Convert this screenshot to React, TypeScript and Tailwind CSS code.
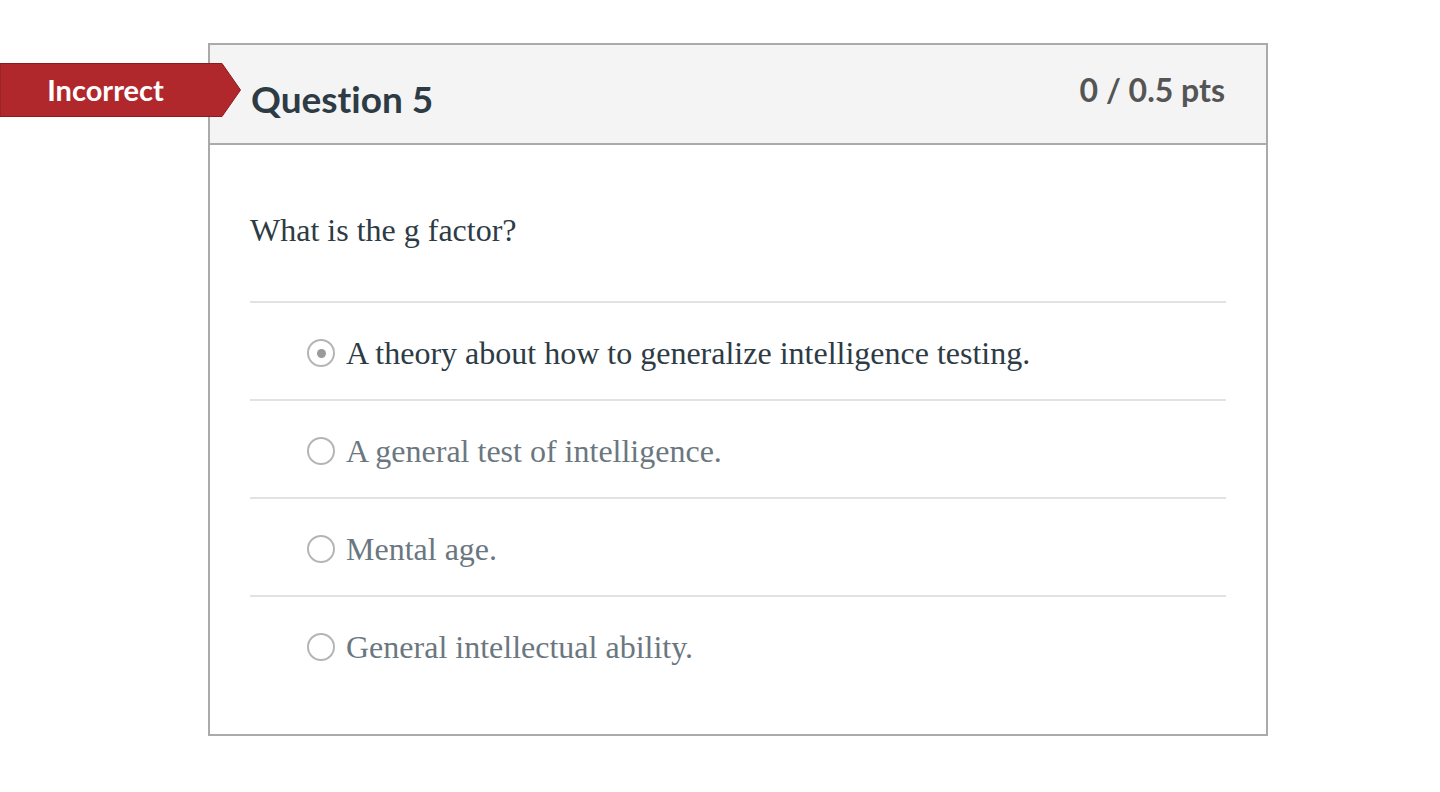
const ANSWERS = [
  { text: "A theory about how to generalize intelligence testing.", selected: true },
  { text: "A general test of intelligence.", selected: false },
  { text: "Mental age.", selected: false },
  { text: "General intellectual ability.", selected: false },
];

function Radio({ selected }: { selected: boolean }) {
  return (
    <span className="flex h-[28px] w-[28px] shrink-0 items-center justify-center rounded-full border-2 border-[#b5b5b5] bg-white">
      {selected && <span className="h-[9px] w-[9px] rounded-full bg-[#9a9a9a]" />}
    </span>
  );
}

export default function App() {
  return (
    <div className="relative min-h-[792px] w-full bg-white pt-[43px]">
      {/* incorrect ribbon */}
      <div className="absolute left-0 top-[63px] h-[54px] w-[242px]">
        <svg width="242" height="54" viewBox="0 0 242 54" className="absolute inset-0" aria-hidden>
          <polygon points="0,0.5 222,0.5 240.5,27 222,53.5 0,53.5" fill="#b1282c" stroke="#8c1b1e" strokeWidth="1" />
        </svg>
        <span className="absolute left-0 top-0 flex h-[54px] w-[211px] items-center justify-center font-['Lato',sans-serif] text-[29px] font-bold text-white [font-variant-ligatures:none]">
          Incorrect
        </span>
      </div>

      <div className="ml-[208px] w-[1060px] border-2 border-[#aaaaaa] font-['Liberation_Serif',serif]">
        <div className="flex h-[100px] items-start justify-between border-b-2 border-[#aaaaaa] bg-[#f4f4f4] px-[41px] font-['Lato',sans-serif] [font-variant-ligatures:none]">
          <h2 className="pt-[30px] text-[37px] font-bold leading-[48px] text-[#2d3b45]">
            Question 5
          </h2>
          <span className="pt-[23px] text-[32px] font-bold leading-[44px] text-[#555555]">
            0 / 0.5 pts
          </span>
        </div>

        <div className="px-[40px] pb-[39px] pt-[61px]">
          <p className="text-[32px] leading-[48px] text-[#2d3b45]">What is the g factor?</p>
          <div className="mt-[47px]">
            {ANSWERS.map((a, i) => (
              <div
                key={i}
                className={
                  i === 0
                    ? "flex h-[100px] items-center gap-[11px] border-y-2 border-[#e2e2e2] pl-[57px] pt-[4px]"
                    : i === ANSWERS.length - 1
                      ? "flex h-[98px] items-center gap-[11px] pl-[57px] pt-[2px]"
                      : "flex h-[98px] items-center gap-[11px] border-b-2 border-[#e2e2e2] pl-[57px] pt-[4px]"
                }
              >
                <Radio selected={a.selected} />
                <span className={a.selected ? "text-[32px] text-[#2d3b45]" : "text-[32px] text-[#6b7780]"}>
                  {a.text}
                </span>
              </div>
            ))}
          </div>
        </div>
      </div>
    </div>
  );
}
